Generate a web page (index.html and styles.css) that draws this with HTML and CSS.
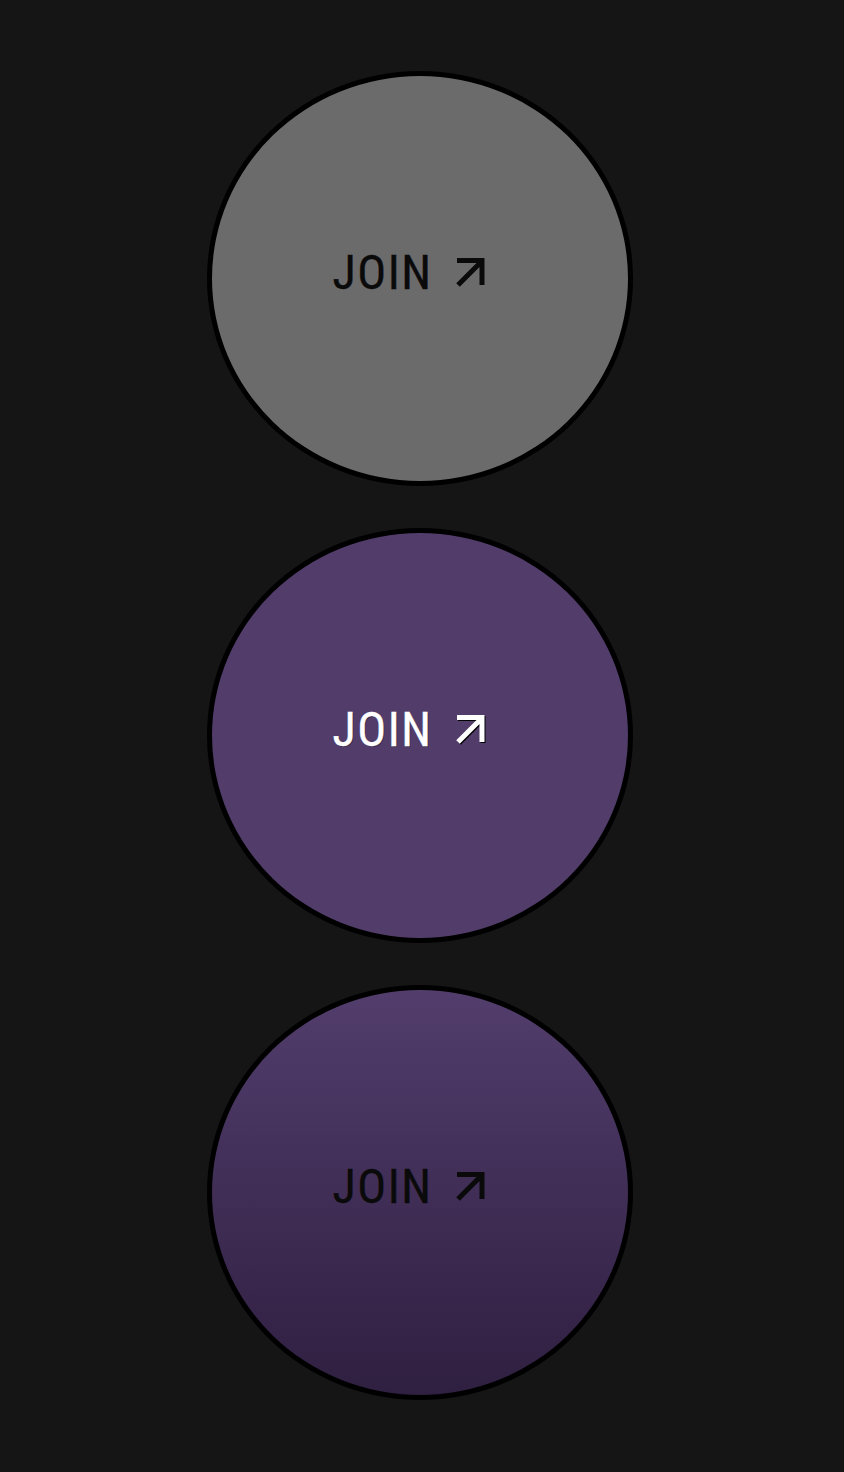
FILE: index.html
```html
<!DOCTYPE html>
<html lang="en">
<head>
<meta charset="utf-8">
<title>Join buttons</title>
<link rel="stylesheet" href="styles.css">
</head>
<body>
<main class="stack">
  <button class="join join-gray" type="button">
    <span class="label">JOIN</span>
    <svg class="arrow" viewBox="0 0 32 32" width="32" height="32" aria-hidden="true"><path d="M4 29 L27 6 M3 4.5 H28 V29" fill="none" stroke="currentColor" stroke-width="5"/></svg>
  </button>
  <button class="join join-hover" type="button">
    <span class="label">JOIN</span>
    <svg class="arrow" viewBox="0 0 32 32" width="32" height="32" aria-hidden="true"><path d="M4 29 L27 6 M3 4.5 H28 V29" fill="none" stroke="currentColor" stroke-width="5"/></svg>
  </button>
  <button class="join join-gradient" type="button">
    <span class="label">JOIN</span>
    <svg class="arrow" viewBox="0 0 32 32" width="32" height="32" aria-hidden="true"><path d="M4 29 L27 6 M3 4.5 H28 V29" fill="none" stroke="currentColor" stroke-width="5"/></svg>
  </button>
</main>
</body>
</html>
```

FILE: styles.css
```css
html, body {
  margin: 0;
  background: #151515;
}

.stack {
  display: flex;
  flex-direction: column;
  align-items: center;
  gap: 42px;
  padding: 71px 4px 0 0;
}

.join {
  box-sizing: border-box;
  width: 426px;
  height: 415px;
  border: 5px solid #000;
  border-radius: 50%;
  display: flex;
  align-items: center;
  justify-content: center;
  gap: 22px;
  padding: 0 21px 12px 0;
  margin: 0;
  font-family: "Liberation Sans Narrow", "Roboto Condensed", Roboto, Arial, sans-serif;
  font-size: 48px;
  line-height: 1;
  cursor: pointer;
}

.label {
  display: block;
  letter-spacing: 1.5px;
  -webkit-text-stroke: 0.4px currentColor;
}

.arrow {
  display: block;
  width: 32px;
  height: 32px;
  margin-top: -2px;
}

.join-gray {
  background: #6b6b6b;
  color: #0a0a0a;
}

.join-hover {
  background: #513c6a;
  color: #ffffff;
}

.join-hover .label {
  text-shadow: 1px 1px 0 rgba(0, 0, 0, 0.35);
}

.join-hover .arrow {
  filter: drop-shadow(1.5px 1.5px 0 #000);
}

.join-gradient {
  background: linear-gradient(180deg, #523d6c 0%, #3d2b52 60%, #2f1f40 100%);
  color: #0a0a0a;
}
```
